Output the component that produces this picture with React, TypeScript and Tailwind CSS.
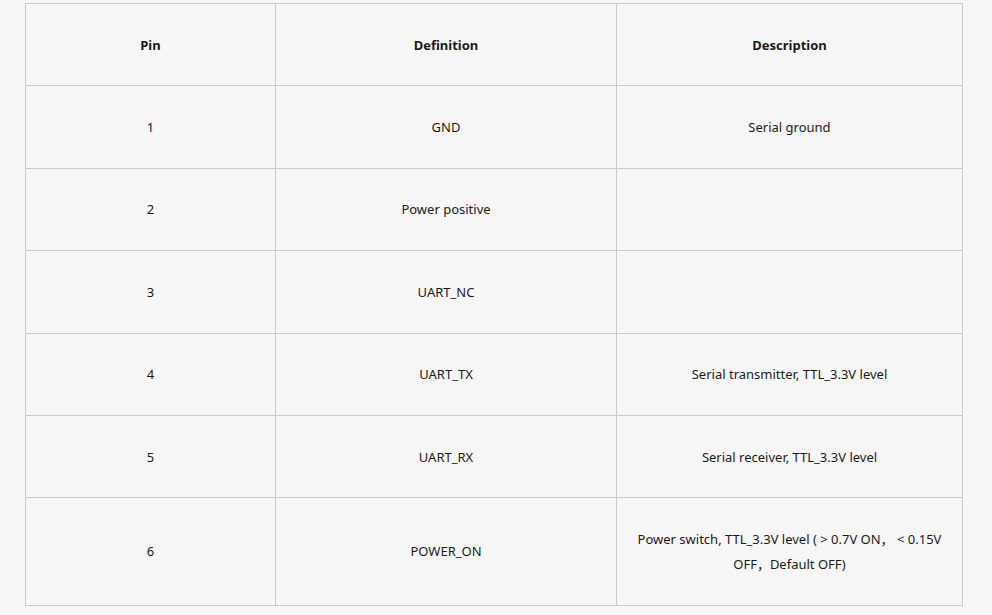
const rows = [
  { pin: "1", def: "GND", desc: "Serial ground" },
  { pin: "2", def: "Power positive", desc: "" },
  { pin: "3", def: "UART_NC", desc: "" },
  { pin: "4", def: "UART_TX", desc: "Serial transmitter, TTL_3.3V level" },
  { pin: "5", def: "UART_RX", desc: "Serial receiver, TTL_3.3V level" },
  {
    pin: "6",
    def: "POWER_ON",
    desc: "Power switch, TTL_3.3V level ( > 0.7V ON，  < 0.15V OFF，Default OFF)",
  },
];

const cell =
  "border border-[#cbcbcb] px-[16px] pt-[28.7px] pb-[27.7px] text-center leading-[25px]";

export default function App() {
  return (
    <div className="min-h-[615px] w-full bg-[#f7f7f7] pl-[25px] pt-[3px] font-['Noto_Sans','Noto_Sans_CJK_SC',sans-serif] text-[13px] text-[#1a1a1a]">
      <table className="w-[937px] table-fixed border-collapse border border-[#cbcbcb]">
        <colgroup>
          <col className="w-[250px]" />
          <col className="w-[341px]" />
          <col className="w-[346px]" />
        </colgroup>
        <thead>
          <tr>
            {["Pin", "Definition", "Description"].map((h) => (
              <th key={h} className={`${cell} font-bold`}>
                {h}
              </th>
            ))}
          </tr>
        </thead>
        <tbody>
          {rows.map((r) => (
            <tr key={r.pin}>
              <td className={cell}>{r.pin}</td>
              <td className={cell}>{r.def}</td>
              <td className={cell}>{r.desc}</td>
            </tr>
          ))}
        </tbody>
      </table>
    </div>
  );
}
